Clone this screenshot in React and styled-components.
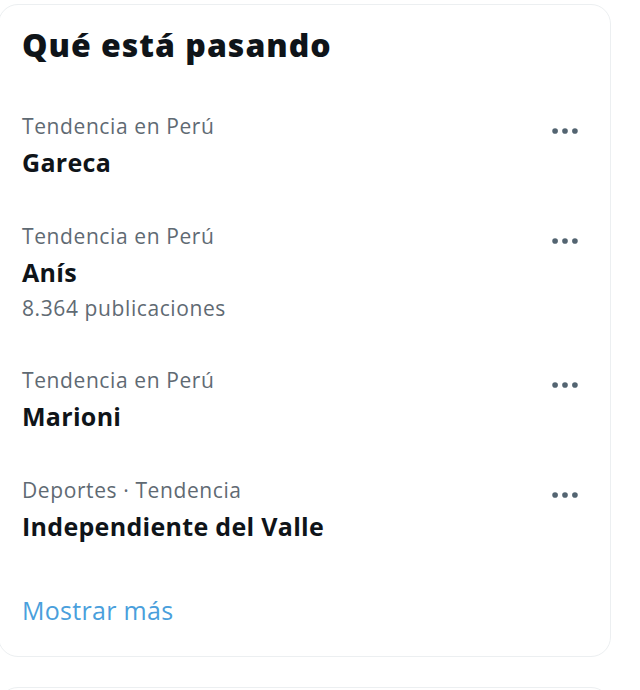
import React from 'react'
import styled, { createGlobalStyle } from 'styled-components'

const trends = [
  { meta: 'Tendencia en Perú', name: 'Gareca' },
  { meta: 'Tendencia en Perú', name: 'Anís', count: '8.364 publicaciones' },
  { meta: 'Tendencia en Perú', name: 'Marioni' },
  { meta: 'Deportes · Tendencia', name: 'Independiente del Valle' },
]

const MoreIcon = () => (
  <svg viewBox="0 0 24 24" width="34" height="34" aria-hidden="true">
    <circle cx="5" cy="12" r="2" />
    <circle cx="12" cy="12" r="2" />
    <circle cx="19" cy="12" r="2" />
  </svg>
)

const App = () => {
  return (
    <Page>
      <GlobalStyle />
      <Card>
        <Header>
          <Title>Qué está pasando</Title>
        </Header>
        {trends.map((t, i) => (
          <Trend key={i}>
            <TrendText>
              <Meta>{t.meta}</Meta>
              <Name>{t.name}</Name>
              {t.count && <Count>{t.count}</Count>}
            </TrendText>
            <MoreButton>
              <MoreIcon />
            </MoreButton>
          </Trend>
        ))}
        <Footer>
          <ShowMore>Mostrar más</ShowMore>
        </Footer>
      </Card>
      <NextCard />
    </Page>
  )
}

export default App

const GlobalStyle = createGlobalStyle`
    body {
        margin: 0;
        background: #ffffff;
        font-family: "Open Sans", "Noto Sans", sans-serif;
        overflow: hidden;
    }
`

const Page = styled.div`
    display: flex;
    flex-direction: column;
    gap: 30px;
    padding-top: 4px;
    margin-left: -2px;
    width: 613px;
    height: 686px;
    overflow: hidden;
`

const Card = styled.div`
    flex-shrink: 0;
    background: #ffffff;
    border: 1px solid #eceff1;
    border-radius: 20px;
    display: flex;
    flex-direction: column;
`

const Header = styled.div`
    padding: 20px 23px 25px;
`

const Title = styled.h2`
    margin: 0;
    font-size: 32px;
    line-height: 40px;
    font-weight: 800;
    letter-spacing: 1px;
    color: #0f1419;
`

const Trend = styled.div`
    display: flex;
    align-items: flex-start;
    justify-content: space-between;
    padding: 22px 28px 22px 23px;
`

const TrendText = styled.div`
    display: flex;
    flex-direction: column;
`

const Meta = styled.span`
    font-size: 21px;
    line-height: 28px;
    letter-spacing: 0.6px;
    color: #5f6a73;
`

const Name = styled.span`
    margin-top: 6px;
    font-size: 25px;
    line-height: 32px;
    font-weight: 700;
    letter-spacing: 0.3px;
    color: #0f1419;
`

const Count = styled(Meta)`
    margin-top: 6px;
`

const MoreButton = styled.div`
    margin-top: 2px;
    width: 34px;
    height: 34px;
    fill: #536471;
    display: flex;
`

const Footer = styled.div`
    padding: 30px 23px;
`

const ShowMore = styled.span`
    font-size: 25px;
    line-height: 32px;
    letter-spacing: 0.3px;
    color: #4a9fdc;
`

const NextCard = styled.div`
    flex-shrink: 0;
    height: 40px;
    border: 1px solid #eceff1;
    border-radius: 20px 20px 0 0;
`
